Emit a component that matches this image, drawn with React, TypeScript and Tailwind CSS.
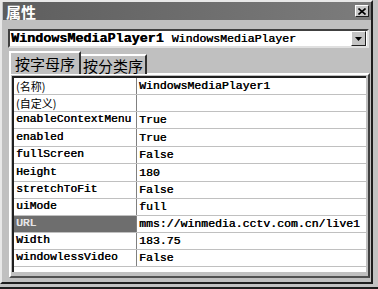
import React from "react";

const rows = [
  { name: "(名称)", value: "WindowsMediaPlayer1", cjk: true, h: 17 },
  { name: "(自定义)", value: "", cjk: true, h: 17 },
  { name: "enableContextMenu", value: "True", h: 17 },
  { name: "enabled", value: "True", h: 18 },
  { name: "fullScreen", value: "False", h: 17 },
  { name: "Height", value: "180", h: 18 },
  { name: "stretchToFit", value: "False", h: 17 },
  { name: "uiMode", value: "full", h: 17 },
  { name: "URL", value: "mms://winmedia.cctv.com.cn/live1", selected: true, h: 17 },
  { name: "Width", value: "183.75", h: 17 },
  { name: "windowlessVideo", value: "False", h: 17 },
];

const mono = "font-['Liberation_Mono','Noto_Sans_CJK_SC',monospace] [text-shadow:0.4px_0_0_currentColor]";
const cjk = "font-['Noto_Sans_CJK_SC',sans-serif]";

const App: React.FC = () => {
  return (
    <div className="w-[378px] h-[289px] bg-[#c2c2c2] border-b-2 border-b-[#1e1e1e] overflow-hidden">
      <div className="w-[373px] h-[284px] flex flex-col bg-[#c0c0c0] border-2 border-t-[#e8e8e8] border-l-[#e8e8e8] border-r-[#1e1e1e] border-b-[#1e1e1e] pl-px">
        {/* Title */}
        <div className="h-[18px] flex items-center justify-between bg-gradient-to-r from-[#5e5e5e] to-[#7c7c7c] pl-[3px] pr-[2px]">
          <span className={`${cjk} text-[15px] font-bold text-white leading-none`}>属性</span>
          <div className="w-[14px] h-[12px] bg-[#c8c8c8] border border-t-white border-l-white border-r-[#202020] border-b-[#202020] flex items-center justify-center">
            <svg width="8" height="7" viewBox="0 0 8 7">
              <path d="M0.5 0.5 L7.5 6.5 M7.5 0.5 L0.5 6.5" stroke="#000" strokeWidth="1.6" />
            </svg>
          </div>
        </div>

        {/* Object dropdown */}
        <div className="mt-[9px] ml-[5px] mr-[2px] h-[19px] flex items-center bg-white border-2 border-t-[#404040] border-l-[#404040] border-r-[#e0e0e0] border-b-[#e0e0e0]">
          <span className={`${mono} text-[13.4px] font-bold text-black leading-none pl-px whitespace-pre`}>WindowsMediaPlayer1</span>
          <span className={`${mono} text-[11.5px] text-black leading-none pl-[8px] whitespace-pre`}>WindowsMediaPlayer</span>
          <div className="ml-auto mr-px w-[15px] h-[15px] bg-[#c4c4c4] border border-t-white border-l-white border-r-[#202020] border-b-[#202020] flex items-center justify-center">
            <svg width="7" height="4" viewBox="0 0 7 4">
              <path d="M0 0 L7 0 L3.5 4 Z" fill="#000" />
            </svg>
          </div>
        </div>

        {/* Tabs */}
        <div className="mt-[3px] ml-[6px] flex items-end h-[23px] relative z-10 -mb-px">
          <div className="h-[23px] w-[72px] bg-[#c0c0c0] border-t-2 border-l-2 border-t-white border-l-white border-r-2 border-r-[#303030] flex items-center justify-center">
            <span className={`${cjk} text-[15px] text-black leading-none`}>按字母序</span>
          </div>
          <div className="h-[20px] w-[66px] bg-[#c0c0c0] border-t-2 border-t-white border-r-2 border-r-[#303030] flex items-center justify-center">
            <span className={`${cjk} text-[15px] text-black leading-none`}>按分类序</span>
          </div>
        </div>

        {/* Panel */}
        <div className="ml-[6px] mr-px h-[205px] border-2 border-t-white border-l-white border-r-[#404040] border-b-[#505050] pl-px pt-px pr-[2px] pb-[4px] flex">
          <div className="flex-1 bg-white border-t-2 border-l-2 border-t-[#202020] border-l-[#202020] flex flex-col">
            {rows.map((r) => (
              <div
                key={r.name}
                className={`flex border-b border-b-[#c0c0c0] ${r.h === 18 ? "h-[18px]" : "h-[17px]"}`}
              >
                <div
                  className={`w-[123px] shrink-0 border-r border-r-[#808080] pl-[2px] flex items-center whitespace-pre ${
                    r.cjk ? `${cjk} text-[11px] leading-none` : `${mono} text-[11.3px] leading-none`
                  } ${r.selected ? "bg-[#6e6e6e] text-[#e8e8e8]" : "text-black"}`}
                >
                  {r.name}
                </div>
                <div className={`${mono} text-[11.5px] leading-none text-black pl-[2px] flex items-center whitespace-pre`}>
                  {r.value}
                </div>
              </div>
            ))}
          </div>
        </div>
      </div>
    </div>
  );
};

export default App;
